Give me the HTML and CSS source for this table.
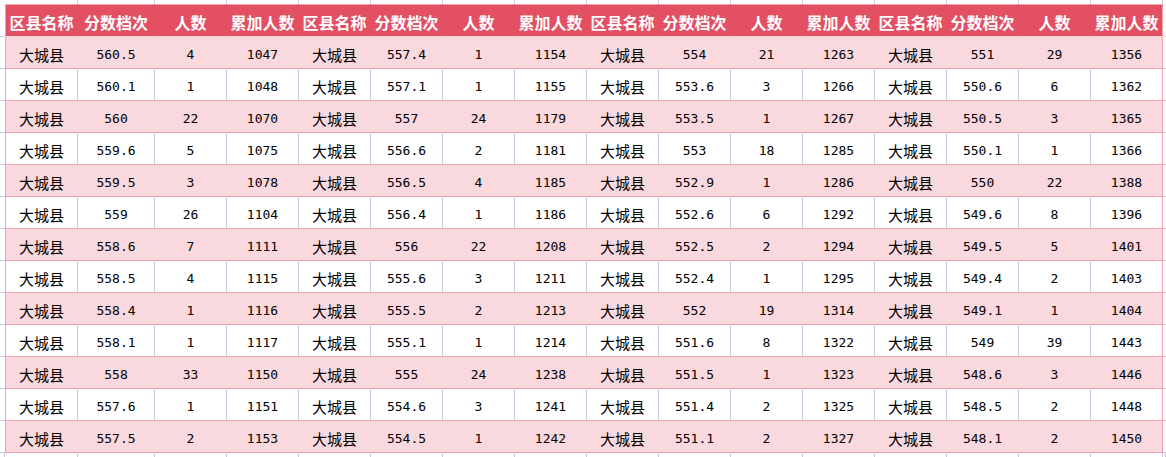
FILE: index.html
```html
<!DOCTYPE html>
<html lang="zh-CN">
<head>
<meta charset="utf-8">
<title>分数档次</title>
<link rel="stylesheet" href="styles.css">
</head>
<body>
<div class="sheet">
  <div class="row gridtop"><i></i><i class="gap"></i><i class="gap"></i><i class="gap"></i><i class="gap"></i><i class="gap"></i><i class="gap"></i><i class="gap"></i><i class="gap"></i><i class="gap"></i><i class="gap"></i><i class="gap"></i><i class="gap"></i><i class="gap"></i><i class="gap"></i><i class="gap"></i><i class="gap"></i><i></i></div>
  <div class="row head"><i class="edge"></i><span class="cell first">区县名称</span><span class="cell">分数档次</span><span class="cell">人数</span><span class="cell">累加人数</span><span class="cell">区县名称</span><span class="cell">分数档次</span><span class="cell">人数</span><span class="cell">累加人数</span><span class="cell">区县名称</span><span class="cell">分数档次</span><span class="cell">人数</span><span class="cell">累加人数</span><span class="cell">区县名称</span><span class="cell">分数档次</span><span class="cell">人数</span><span class="cell last">累加人数</span><i class="tail"></i></div>
  <div class="row pink"><i class="edge"></i><span class="cell first">大城县</span><span class="cell num">560.5</span><span class="cell num">4</span><span class="cell num">1047</span><span class="cell">大城县</span><span class="cell num">557.4</span><span class="cell num">1</span><span class="cell num">1154</span><span class="cell">大城县</span><span class="cell num">554</span><span class="cell num">21</span><span class="cell num">1263</span><span class="cell">大城县</span><span class="cell num">551</span><span class="cell num">29</span><span class="cell num last">1356</span><i class="tail"></i></div>
  <div class="row white"><i class="edge"></i><span class="cell first">大城县</span><span class="cell num">560.1</span><span class="cell num">1</span><span class="cell num">1048</span><span class="cell">大城县</span><span class="cell num">557.1</span><span class="cell num">1</span><span class="cell num">1155</span><span class="cell">大城县</span><span class="cell num">553.6</span><span class="cell num">3</span><span class="cell num">1266</span><span class="cell">大城县</span><span class="cell num">550.6</span><span class="cell num">6</span><span class="cell num last">1362</span><i class="tail"></i></div>
  <div class="row pink"><i class="edge"></i><span class="cell first">大城县</span><span class="cell num">560</span><span class="cell num">22</span><span class="cell num">1070</span><span class="cell">大城县</span><span class="cell num">557</span><span class="cell num">24</span><span class="cell num">1179</span><span class="cell">大城县</span><span class="cell num">553.5</span><span class="cell num">1</span><span class="cell num">1267</span><span class="cell">大城县</span><span class="cell num">550.5</span><span class="cell num">3</span><span class="cell num last">1365</span><i class="tail"></i></div>
  <div class="row white"><i class="edge"></i><span class="cell first">大城县</span><span class="cell num">559.6</span><span class="cell num">5</span><span class="cell num">1075</span><span class="cell">大城县</span><span class="cell num">556.6</span><span class="cell num">2</span><span class="cell num">1181</span><span class="cell">大城县</span><span class="cell num">553</span><span class="cell num">18</span><span class="cell num">1285</span><span class="cell">大城县</span><span class="cell num">550.1</span><span class="cell num">1</span><span class="cell num last">1366</span><i class="tail"></i></div>
  <div class="row pink"><i class="edge"></i><span class="cell first">大城县</span><span class="cell num">559.5</span><span class="cell num">3</span><span class="cell num">1078</span><span class="cell">大城县</span><span class="cell num">556.5</span><span class="cell num">4</span><span class="cell num">1185</span><span class="cell">大城县</span><span class="cell num">552.9</span><span class="cell num">1</span><span class="cell num">1286</span><span class="cell">大城县</span><span class="cell num">550</span><span class="cell num">22</span><span class="cell num last">1388</span><i class="tail"></i></div>
  <div class="row white"><i class="edge"></i><span class="cell first">大城县</span><span class="cell num">559</span><span class="cell num">26</span><span class="cell num">1104</span><span class="cell">大城县</span><span class="cell num">556.4</span><span class="cell num">1</span><span class="cell num">1186</span><span class="cell">大城县</span><span class="cell num">552.6</span><span class="cell num">6</span><span class="cell num">1292</span><span class="cell">大城县</span><span class="cell num">549.6</span><span class="cell num">8</span><span class="cell num last">1396</span><i class="tail"></i></div>
  <div class="row pink"><i class="edge"></i><span class="cell first">大城县</span><span class="cell num">558.6</span><span class="cell num">7</span><span class="cell num">1111</span><span class="cell">大城县</span><span class="cell num">556</span><span class="cell num">22</span><span class="cell num">1208</span><span class="cell">大城县</span><span class="cell num">552.5</span><span class="cell num">2</span><span class="cell num">1294</span><span class="cell">大城县</span><span class="cell num">549.5</span><span class="cell num">5</span><span class="cell num last">1401</span><i class="tail"></i></div>
  <div class="row white"><i class="edge"></i><span class="cell first">大城县</span><span class="cell num">558.5</span><span class="cell num">4</span><span class="cell num">1115</span><span class="cell">大城县</span><span class="cell num">555.6</span><span class="cell num">3</span><span class="cell num">1211</span><span class="cell">大城县</span><span class="cell num">552.4</span><span class="cell num">1</span><span class="cell num">1295</span><span class="cell">大城县</span><span class="cell num">549.4</span><span class="cell num">2</span><span class="cell num last">1403</span><i class="tail"></i></div>
  <div class="row pink"><i class="edge"></i><span class="cell first">大城县</span><span class="cell num">558.4</span><span class="cell num">1</span><span class="cell num">1116</span><span class="cell">大城县</span><span class="cell num">555.5</span><span class="cell num">2</span><span class="cell num">1213</span><span class="cell">大城县</span><span class="cell num">552</span><span class="cell num">19</span><span class="cell num">1314</span><span class="cell">大城县</span><span class="cell num">549.1</span><span class="cell num">1</span><span class="cell num last">1404</span><i class="tail"></i></div>
  <div class="row white"><i class="edge"></i><span class="cell first">大城县</span><span class="cell num">558.1</span><span class="cell num">1</span><span class="cell num">1117</span><span class="cell">大城县</span><span class="cell num">555.1</span><span class="cell num">1</span><span class="cell num">1214</span><span class="cell">大城县</span><span class="cell num">551.6</span><span class="cell num">8</span><span class="cell num">1322</span><span class="cell">大城县</span><span class="cell num">549</span><span class="cell num">39</span><span class="cell num last">1443</span><i class="tail"></i></div>
  <div class="row pink"><i class="edge"></i><span class="cell first">大城县</span><span class="cell num">558</span><span class="cell num">33</span><span class="cell num">1150</span><span class="cell">大城县</span><span class="cell num">555</span><span class="cell num">24</span><span class="cell num">1238</span><span class="cell">大城县</span><span class="cell num">551.5</span><span class="cell num">1</span><span class="cell num">1323</span><span class="cell">大城县</span><span class="cell num">548.6</span><span class="cell num">3</span><span class="cell num last">1446</span><i class="tail"></i></div>
  <div class="row white"><i class="edge"></i><span class="cell first">大城县</span><span class="cell num">557.6</span><span class="cell num">1</span><span class="cell num">1151</span><span class="cell">大城县</span><span class="cell num">554.6</span><span class="cell num">3</span><span class="cell num">1241</span><span class="cell">大城县</span><span class="cell num">551.4</span><span class="cell num">2</span><span class="cell num">1325</span><span class="cell">大城县</span><span class="cell num">548.5</span><span class="cell num">2</span><span class="cell num last">1448</span><i class="tail"></i></div>
  <div class="row pink"><i class="edge"></i><span class="cell first">大城县</span><span class="cell num">557.5</span><span class="cell num">2</span><span class="cell num">1153</span><span class="cell">大城县</span><span class="cell num">554.5</span><span class="cell num">1</span><span class="cell num">1242</span><span class="cell">大城县</span><span class="cell num">551.1</span><span class="cell num">2</span><span class="cell num">1327</span><span class="cell">大城县</span><span class="cell num">548.1</span><span class="cell num">2</span><span class="cell num last">1450</span><i class="tail"></i></div>
  <div class="row gridbottom"><i class="gap"></i><i class="gap"></i><i class="gap"></i><i class="gap"></i><i class="gap"></i><i class="gap"></i><i class="gap"></i><i class="gap"></i><i class="gap"></i><i class="gap"></i><i class="gap"></i><i class="gap"></i><i class="gap"></i><i class="gap"></i><i class="gap"></i><i class="gap"></i><i class="gap"></i><i class="gap"></i></div>
</div>
</body>
</html>
```

FILE: styles.css
```css
* { box-sizing: border-box; }

body {
  margin: 0;
  background: #ffffff;
  font-family: "Noto Sans CJK SC", sans-serif;
}

.sheet {
  width: 1166px;
  overflow: hidden;
}

.row {
  display: grid;
  grid-template-columns: 5px 73px 77px repeat(14, 72px) 3px;
  height: 32px;
}

.row i {
  display: block;
  font-style: normal;
}

.gridtop,
.gridbottom {
  height: 4px;
}

.gap {
  border-right: 1px solid #c6ccdd;
}

.edge,
.tail {
  border-bottom: 1px solid #c6ccdd;
}

.cell {
  display: flex;
  align-items: center;
  justify-content: center;
  padding-top: 3px;
  border-right: 1px solid transparent;
  border-bottom: 1px solid #f2a0aa;
  font-size: 15px;
  color: #000000;
  white-space: nowrap;
  overflow: hidden;
}

.num {
  font-family: "DejaVu Sans Mono", monospace;
  font-size: 13px;
}

.head {
  height: 33px;
}

.head .cell {
  background: #e34f63;
  color: #ffffff;
  font-weight: 700;
  font-size: 16px;
  padding-top: 2px;
  border-top: 1px solid #f2a0aa;
  border-bottom: 1px solid #fad9de;
}

.pink .cell {
  background: #fad9de;
}

.white .cell {
  background: #ffffff;
  border-right-color: #c6ccdd;
}

.row .cell.first {
  border-left: 1px solid #f2a0aa;
}

.row .cell.last {
  border-right-color: #f2a0aa;
}
```
